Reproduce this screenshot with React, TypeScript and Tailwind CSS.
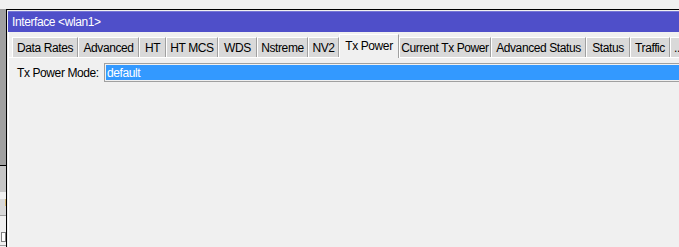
import React from "react";

const tabs: { label: string; w: number; selected?: boolean; left?: boolean }[] = [
  { label: "Data Rates", w: 66 },
  { label: "Advanced", w: 61 },
  { label: "HT", w: 27 },
  { label: "HT MCS", w: 52 },
  { label: "WDS", w: 39 },
  { label: "Nstreme", w: 51 },
  { label: "NV2", w: 31 },
  { label: "Tx Power", w: 60, selected: true },
  { label: "Current Tx Power", w: 92 },
  { label: "Advanced Status", w: 95 },
  { label: "Status", w: 44 },
  { label: "Traffic", w: 40 },
  { label: "...", w: 30, left: true },
];

export default function App() {
  return (
    <div
      className="w-[679px] h-[247px] bg-[#f0f0f0] overflow-hidden flex flex-col text-[12px] tracking-[-0.4px] text-black"
      style={{ fontFamily: '"Liberation Sans", Arial, sans-serif' }}
    >
      <div className="h-[9px] shrink-0" />
      <div className="flex flex-1 min-h-0">
        {/* left strip of background window */}
        <div className="w-[6px] flex flex-col shrink-0">
          <div className="h-[157px] bg-[#a0a0a0]" />
          <div className="h-[1px] bg-black" />
          <div className="h-[26px] bg-[#c6c6c6]" />
          <div className="h-[7px] bg-[#f0f0f0]" />
          <div className="h-[16px] bg-[#d8d8d8] flex justify-end">
            <div className="w-[1px] h-[7px] bg-[#d8b870]" />
          </div>
          <div className="h-[1px] bg-[#a0a0a0]" />
          <div className="flex-1 bg-[#f0f0f0] flex flex-col">
            <div className="h-[16px]" />
            <div className="ml-[1px] h-[10px] border border-[#808080] bg-white" />
            <div className="h-[3px]" />
            <div className="h-[2px] border-t border-[#a0a0a0]" />
          </div>
        </div>
        {/* window */}
        <div className="flex-1 border-l border-t border-black pl-[1px] pt-[1px] flex flex-col min-w-0">
          <div className="h-[21px] bg-[#4f4fc9] border-t border-[#7676d6] text-white flex items-center pl-[4px] shrink-0 whitespace-nowrap">
            Interface &lt;wlan1&gt;
          </div>
          <div className="flex-1 border-l border-white flex flex-col">
            <div className="h-[25px] flex items-end pl-[3px] whitespace-nowrap shrink-0">
              {tabs.map((t) =>
                t.selected ? (
                  <div
                    key={t.label}
                    style={{ width: t.w }}
                    className="h-[24px] -mb-px bg-[#f0f0f0] border-l border-t border-white border-r border-r-[#a0a0a0] flex items-center justify-center shrink-0 relative z-10 pb-[2px]"
                  >
                    {t.label}
                  </div>
                ) : t.left ? (
                  <div
                    key={t.label}
                    style={{ width: t.w }}
                    className="h-[20px] bg-[#d9d9d9] border-l border-t border-white flex items-center justify-start pl-[3px] shrink-0"
                  >
                    {t.label}
                  </div>
                ) : (
                  <div
                    key={t.label}
                    style={{ width: t.w }}
                    className="h-[20px] bg-[#d9d9d9] border-l border-t border-white border-r border-r-[#a0a0a0] flex items-center justify-center shrink-0"
                  >
                    {t.label}
                  </div>
                )
              )}
            </div>
            <div className="flex-1 border-t border-white pt-[5px] pl-[8px]">
              <div className="flex items-center h-[19px]">
                <div className="w-[87px] shrink-0 whitespace-nowrap">Tx Power Mode:</div>
                <div className="flex-1 h-[19px] border border-[#a0a0a0] border-r-0 bg-[#f0f0f0] p-[1px] pr-0">
                  <div className="h-full bg-[#3399ff] text-white flex items-center pl-[1px] whitespace-nowrap">
                    default
                  </div>
                </div>
              </div>
            </div>
          </div>
        </div>
      </div>
    </div>
  );
}
